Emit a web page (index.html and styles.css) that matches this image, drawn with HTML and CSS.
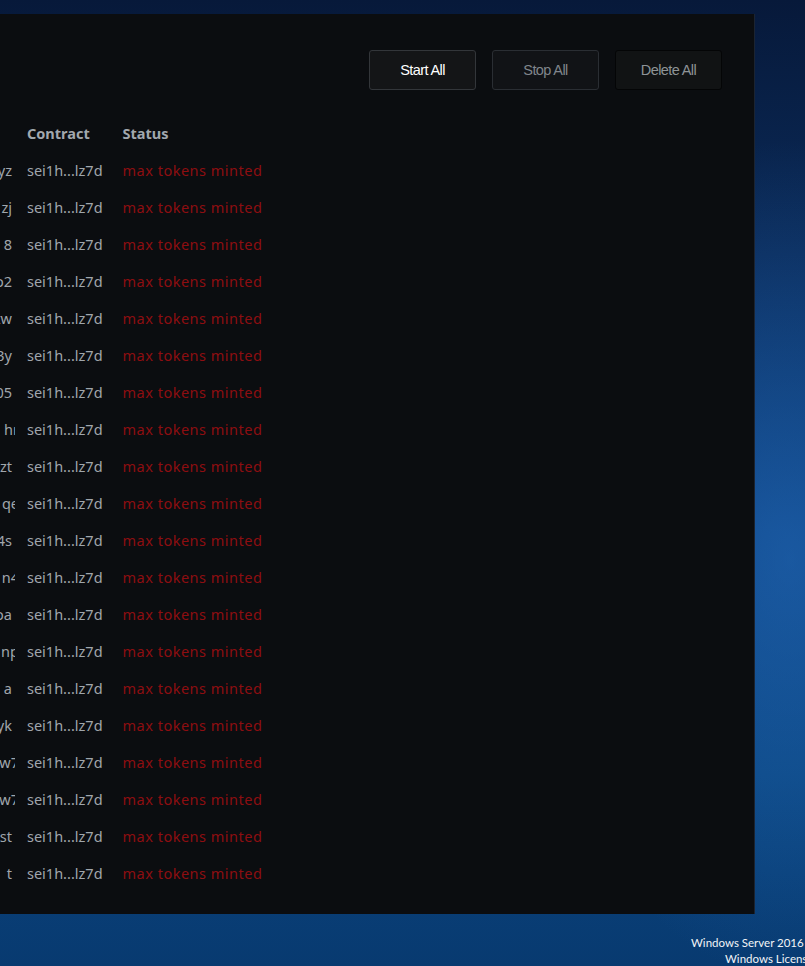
FILE: index.html
```html
<!DOCTYPE html>
<html lang="en">
<head>
	<meta charset="UTF-8">
	<title>Minter</title>
	<link rel="stylesheet" href="styles.css">
</head>
<body>
	<div class="window">
		<div class="toolbar">
			<button class="btn btn-start">Start All</button>
			<button class="btn btn-stop">Stop All</button>
			<button class="btn btn-delete">Delete All</button>
		</div>
		<table class="bots">
			<thead>
				<tr>
					<th><div class="wallet"></div></th>
					<th>Contract</th>
					<th>Status</th>
				</tr>
			</thead>
			<tbody>
				<tr><td><div class="wallet"><span>yz</span></div></td><td>sei1h...lz7d</td><td class="status">max tokens minted</td></tr>
				<tr><td><div class="wallet"><span>zj</span></div></td><td>sei1h...lz7d</td><td class="status">max tokens minted</td></tr>
				<tr><td><div class="wallet"><span>8</span></div></td><td>sei1h...lz7d</td><td class="status">max tokens minted</td></tr>
				<tr><td><div class="wallet"><span>o2</span></div></td><td>sei1h...lz7d</td><td class="status">max tokens minted</td></tr>
				<tr><td><div class="wallet"><span>tw</span></div></td><td>sei1h...lz7d</td><td class="status">max tokens minted</td></tr>
				<tr><td><div class="wallet"><span>3y</span></div></td><td>sei1h...lz7d</td><td class="status">max tokens minted</td></tr>
				<tr><td><div class="wallet"><span>05</span></div></td><td>sei1h...lz7d</td><td class="status">max tokens minted</td></tr>
				<tr><td><div class="wallet"><span class="cut">hr</span></div></td><td>sei1h...lz7d</td><td class="status">max tokens minted</td></tr>
				<tr><td><div class="wallet"><span>zt</span></div></td><td>sei1h...lz7d</td><td class="status">max tokens minted</td></tr>
				<tr><td><div class="wallet"><span class="cut">qe</span></div></td><td>sei1h...lz7d</td><td class="status">max tokens minted</td></tr>
				<tr><td><div class="wallet"><span>4s</span></div></td><td>sei1h...lz7d</td><td class="status">max tokens minted</td></tr>
				<tr><td><div class="wallet"><span class="cut">n4</span></div></td><td>sei1h...lz7d</td><td class="status">max tokens minted</td></tr>
				<tr><td><div class="wallet"><span>oa</span></div></td><td>sei1h...lz7d</td><td class="status">max tokens minted</td></tr>
				<tr><td><div class="wallet"><span class="cut">np</span></div></td><td>sei1h...lz7d</td><td class="status">max tokens minted</td></tr>
				<tr><td><div class="wallet"><span>a</span></div></td><td>sei1h...lz7d</td><td class="status">max tokens minted</td></tr>
				<tr><td><div class="wallet"><span>yk</span></div></td><td>sei1h...lz7d</td><td class="status">max tokens minted</td></tr>
				<tr><td><div class="wallet"><span class="cut">w7</span></div></td><td>sei1h...lz7d</td><td class="status">max tokens minted</td></tr>
				<tr><td><div class="wallet"><span class="cut">w7</span></div></td><td>sei1h...lz7d</td><td class="status">max tokens minted</td></tr>
				<tr><td><div class="wallet"><span>st</span></div></td><td>sei1h...lz7d</td><td class="status">max tokens minted</td></tr>
				<tr><td><div class="wallet"><span>t</span></div></td><td>sei1h...lz7d</td><td class="status">max tokens minted</td></tr>
			</tbody>
		</table>
	</div>
	<div class="watermark">
		<div class="line1">Windows Server 2016 Datacenter Evaluation</div>
		<div class="line2">Windows License valid for 180 days</div>
	</div>
</body>
</html>
```
FILE: styles.css
```css
*{
	margin: 0;
	padding: 0;
	box-sizing: border-box;
}
html, body{
	height: 100%;
}
body{
	position: relative;
	overflow: hidden;
	font-family: "Noto Sans", "Open Sans", sans-serif;
	background-color: #0a3568;
	background-image:
		radial-gradient(ellipse 260px 420px at 790px 560px, rgba(40,110,190,.5), rgba(40,110,190,0)),
		linear-gradient(180deg, #07193a 0%, #0a2a58 25%, #0b4282 55%, #0a4580 80%, #083a70 100%);
}
.window{
	width: 755px;
	height: 900px;
	margin-top: 14px;
	background-color: #0b0d10;
	border-right: 1px solid #1b2432;
}
.toolbar{
	display: flex;
	justify-content: flex-end;
	gap: 16px;
	padding: 36px 32px 0 0;
}
.btn{
	width: 107px;
	height: 40px;
	border-radius: 3px;
	font-family: "Liberation Sans", Arial, sans-serif;
	font-size: 14.5px;
	letter-spacing: -0.6px;
	cursor: pointer;
}
.btn-start{
	background-color: #141517;
	border: 1px solid #33363a;
	color: #fff;
}
.btn-stop{
	background-color: #111316;
	border: 1px solid #2a2e33;
	color: #80868c;
}
.btn-delete{
	background-color: #111314;
	border: 1px solid #040506;
	color: #8e9397;
}
.bots{
	margin-top: 24px;
	border-collapse: collapse;
	font-size: 14.5px;
	color: #a0a6ac;
}
.bots th, .bots td{
	height: 37px;
	padding: 0 20px 0 0;
	text-align: left;
	vertical-align: middle;
	white-space: nowrap;
}
.bots th{
	font-weight: 700;
	color: #a2a8ae;
}
.bots th:first-child, .bots td:first-child{
	padding-right: 12px;
}
.wallet{
	width: 15px;
	overflow: hidden;
	display: flex;
	justify-content: flex-end;
	padding-right: 3px;
}
.wallet span{
	flex-shrink: 0;
}
.wallet .cut{
	margin-right: -7px;
}
.bots .status{
	color: #8e0d11;
	letter-spacing: 0.5px;
}
.watermark{
	position: absolute;
	left: 691px;
	top: 935px;
	font-family: Lato, "Noto Sans", sans-serif;
	font-size: 11.5px;
	line-height: 16px;
	color: #f2f4f7;
	white-space: nowrap;
}
.watermark .line2{
	padding-left: 34px;
}
```
